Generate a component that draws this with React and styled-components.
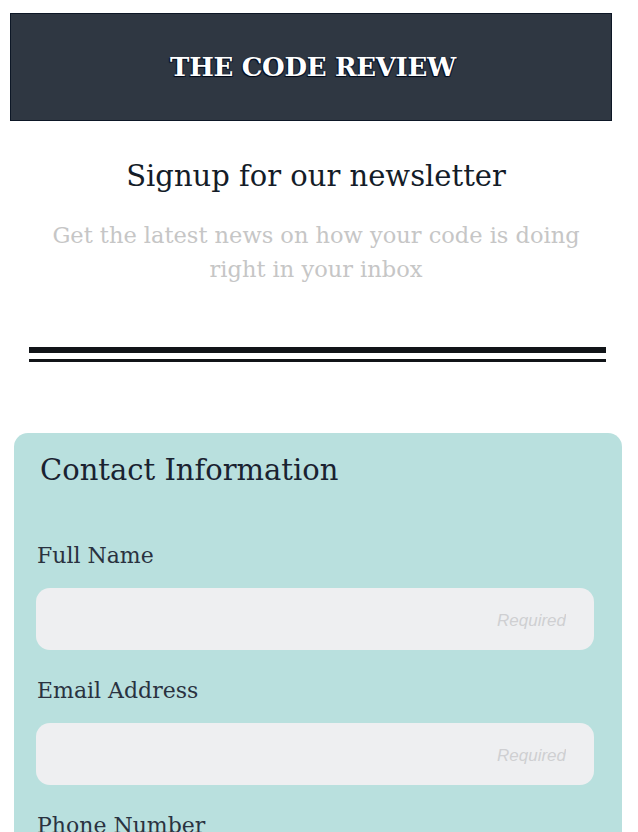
import React from 'react';
import styled, { createGlobalStyle } from 'styled-components';

const GlobalStyle = createGlobalStyle`
  body {
    margin: 0;
    background: #ffffff;
    font-family: "DejaVu Serif", "Liberation Serif", serif;
    color: #1f2733;
  }
`;

const Page = styled.div`
  padding: 13px 0 40px;
`;

const Masthead = styled.header`
  margin: 0 26px 0 10px;
  height: 108px;
  background: #2f3742;
  border: 1px solid #0d1726;
  box-sizing: border-box;
  display: flex;
  align-items: center;
  justify-content: center;
`;

const Brand = styled.h1`
  margin: 0 0 0 4px;
  font-size: 26px;
  font-weight: bold;
  letter-spacing: -0.3px;
  color: #ffffff;
  text-shadow: -1px 1px 1px #000814, 1px 1px 0 #0a1a3a;
`;

const Intro = styled.section`
  display: flex;
  flex-direction: column;
  align-items: center;
  padding: 38px 56px 0 50px;
  text-align: center;
`;

const Headline = styled.h2`
  margin: 0;
  font-size: 29px;
  line-height: 34px;
  font-weight: normal;
  color: #141c28;
`;

const Lede = styled.p`
  margin: 25px 0 0;
  font-size: 22.5px;
  line-height: 34px;
  color: #c6c6c6;
`;

const Divider = styled.hr`
  margin: 61px 32px 0 29px;
  height: 6px;
  border: none;
  border-top: 6px solid #111418;
  border-bottom: 3px solid #111418;
`;

const Card = styled.form`
  margin: 71px 16px 0 14px;
  padding: 20px 28px 24px 22px;
  background: #b9e0de;
  border-radius: 14px;
`;

const CardTitle = styled.h3`
  margin: 0 0 0 4px;
  font-size: 29px;
  line-height: 34px;
  font-weight: normal;
  color: #1a2230;
`;

const Field = styled.div`
  display: flex;
  flex-direction: column;
  margin-top: ${({ first }) => (first ? '56px' : '28px')};
`;

const Label = styled.label`
  font-size: 22px;
  line-height: 26px;
  color: #2a3240;
  margin: 0 0 19px 1px;
`;

const Input = styled.input`
  height: 62px;
  box-sizing: border-box;
  border: none;
  border-radius: 14px;
  background: #eeeff1;
  padding: 4px 28px 0;
  text-align: right;
  font-family: "Liberation Sans", Arial, sans-serif;
  font-size: 17px;
  font-style: italic;
  color: #333;
  outline: none;

  &::placeholder {
    color: #cfcfd2;
  }
`;

const fields = [
  { id: 'name', label: 'Full Name' },
  { id: 'email', label: 'Email Address' },
  { id: 'phone', label: 'Phone Number' },
];

export default function App() {
  return (
    <>
      <GlobalStyle />
      <Page>
        <Masthead>
          <Brand>THE CODE REVIEW</Brand>
        </Masthead>
        <Intro>
          <Headline>Signup for our newsletter</Headline>
          <Lede>Get the latest news on how your code is doing right in your inbox</Lede>
        </Intro>
        <Divider />
        <Card>
          <CardTitle>Contact Information</CardTitle>
          {fields.map((f, i) => (
            <Field key={f.id} first={i === 0}>
              <Label htmlFor={f.id}>{f.label}</Label>
              <Input id={f.id} placeholder="Required" />
            </Field>
          ))}
        </Card>
      </Page>
    </>
  );
}
